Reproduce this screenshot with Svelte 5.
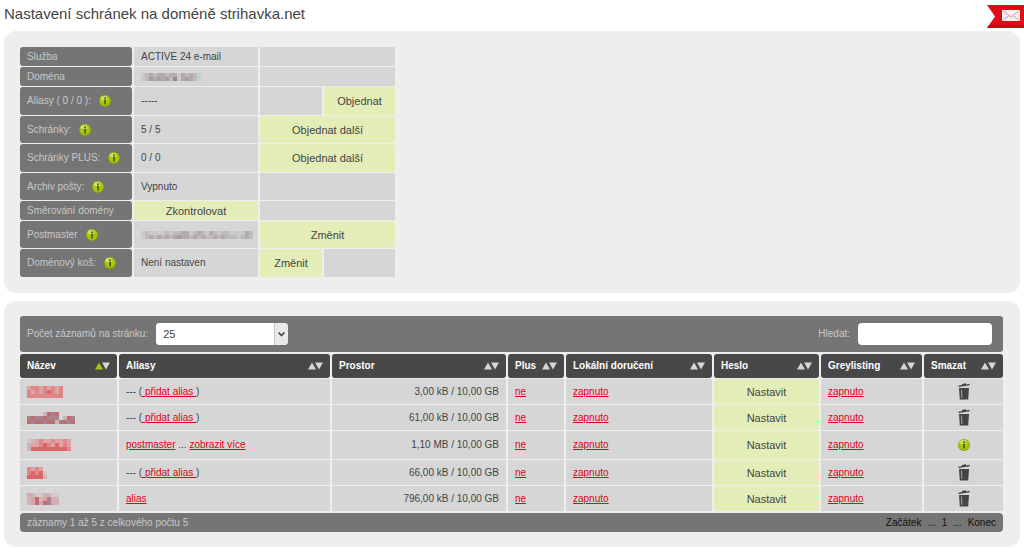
<script lang="ts">
  type Action = { label: string; column: "value" | "first" | "last" | "both" };
  type InfoRow = {
    label: string;
    value?: string;
    mosaic?: string[];
    info?: boolean;
    action?: Action;
  };

  const infoRows: InfoRow[] = [
    { label: "Služba", value: "ACTIVE 24 e-mail" },
    { label: "Doména", mosaic: ["klmlmmlmmkmlmlp", "klnmnmnlokmnmlp"] },
    { label: "Aliasy ( 0 / 0 ):", value: "-----", info: true, action: { label: "Objednat", column: "last" } },
    { label: "Schránky:", value: "5 / 5", info: true, action: { label: "Objednat další", column: "both" } },
    { label: "Schránky PLUS:", value: "0 / 0", info: true, action: { label: "Objednat další", column: "both" } },
    { label: "Archiv pošty:", value: "Vypnuto", info: true },
    { label: "Směrování domény", action: { label: "Zkontrolovat", column: "value" } },
    {
      label: "Postmaster",
      mosaic: ["klkkkklkllmmklmlkmlkllkkkkml", "klmlmlmlmnmmlmlmllmlmlllklml"],
      info: true,
      action: { label: "Změnit", column: "both" },
    },
    { label: "Doménový koš:", value: "Není nastaven", info: true, action: { label: "Změnit", column: "first" } },
  ];

  const columns = [
    { name: "Název", width: 97, sorted: true },
    { name: "Aliasy", width: 211 },
    { name: "Prostor", width: 174 },
    { name: "Plus", width: 56 },
    { name: "Lokální doručení", width: 146 },
    { name: "Heslo", width: 105 },
    { name: "Greylisting", width: 101 },
    { name: "Smazat", width: 79 },
  ];

  const mailboxes = [
    { mosaic: ["abbababab", "bababcbab", "bbbbbbbbb"], alias: "", space: "3,00 kB / 10,00 GB" },
    { mosaic: ["....gfef....", "efeefeee.gfeg", "feffeffgefeff"], alias: "", space: "61,00 kB / 10,00 GB" },
    { mosaic: ["hgabaabaaba", "gaabcbacaba", "gcccccccccb"], alias: "postmaster", more: true, space: "1,10 MB / 10,00 GB", locked: true },
    { mosaic: ["baba.", "bcbch", "ccccg"], alias: "", space: "66,00 kB / 10,00 GB" },
    { mosaic: ["aghhgghh", "gafgaegg", "gafafeag"], alias: "alias", space: "796,00 kB / 10,00 GB" },
  ];

  const shades: Record<string, string> = {
    a: "#dda4a5",
    b: "#df868b",
    c: "#de646b",
    e: "#ab8289",
    f: "#b96f77",
    g: "#cfb4b5",
    h: "#d3c8c9",
    k: "#ccc9c9",
    l: "#bebbbc",
    m: "#b1abad",
    n: "#a39ea3",
    o: "#97878d",
    p: "#c5d0d3",
    ".": "none",
  };

  let pageSize = "25";
  let search = "";
</script>

{#snippet infoIcon()}
  <svg class="info-icon" viewBox="0 0 12 12" role="img" aria-label="Informace">
    <circle cx="6" cy="6" r="6" fill="#89a604" />
    <circle cx="6" cy="5.5" r="5.2" fill="#a8c70c" />
    <ellipse cx="5" cy="3.2" rx="3.4" ry="2.2" fill="#d3e47c" opacity="0.8" />
    <path d="M5.2 2.4h1.7v1.5H5.2zM4.9 4.8h2v4.6H5.3V5.8h-.4z" fill="#4a5510" />
  </svg>
{/snippet}

{#snippet mosaicText(rows: string[])}
  <svg class="mosaic" width={rows[0].length * 4} height={rows.length * 4} shape-rendering="crispEdges" aria-hidden="true">
    {#each rows as row, y}
      {#each row as shade, x}
        <rect x={x * 4} y={y * 4} width="4" height="4" fill={shades[shade]} />
      {/each}
    {/each}
  </svg>
{/snippet}

{#snippet actionCell(label: string, span: number)}
  <td class="action" colspan={span}><button type="button">{label}</button></td>
{/snippet}

<header class="page-header">
  <h1>Nastavení schránek na doméně strihavka.net</h1>
  <svg class="ribbon" viewBox="0 0 37 23" aria-hidden="true">
    <path d="M0 0H37V23H0L8 11.5Z" fill="#df0d18" />
    <path d="M0 23L2 20H37V23Z" fill="#c90a15" />
    <rect x="15" y="5" width="18" height="11" fill="#f3f0ef" />
    <path d="M15.500 5.500l8.500 6.500L32.500 5.500M15.500 15.500l6.500-5M32.500 15.500l-6.500-5" fill="none" stroke="#c2a6a4" />
  </svg>
</header>

<main>
  <section class="panel">
    <table class="info">
      <colgroup>
        <col class="col-label" />
        <col class="col-value" />
        <col class="col-first" />
        <col class="col-last" />
      </colgroup>
      <tbody>
        {#each infoRows as row}
          <tr class:tall={row.info}>
            <th scope="row">
              <span class="row-label">{row.label}{#if row.info}{@render infoIcon()}{/if}</span>
            </th>
            {#if row.action?.column === "value"}
              {@render actionCell(row.action.label, 1)}
            {:else}
              <td>
                {#if row.mosaic}{@render mosaicText(row.mosaic)}{:else}{row.value}{/if}
              </td>
            {/if}
            {#if row.action?.column === "both"}
              {@render actionCell(row.action.label, 2)}
            {:else if row.action?.column === "first"}
              {@render actionCell(row.action.label, 1)}
              <td></td>
            {:else if row.action?.column === "last"}
              <td></td>
              {@render actionCell(row.action.label, 1)}
            {:else}
              <td colspan="2"></td>
            {/if}
          </tr>
        {/each}
      </tbody>
    </table>
  </section>

  <section class="panel list">
    <div class="toolbar">
      <label for="page-size">Počet záznamů na stránku:</label>
      <span class="select-box">
        <select id="page-size" bind:value={pageSize}>
          <option>25</option>
          <option>50</option>
          <option>100</option>
        </select>
        <svg class="select-arrow" viewBox="0 0 14 22" aria-hidden="true">
          <rect width="14" height="22" fill="#e9e9e9" />
          <path d="M.5 0V22" stroke="#c4c4c4" />
          <path d="M4.500 9.500l3 3 3-3" fill="none" stroke="#444" stroke-width="1.600" />
        </svg>
      </span>
      <label class="search-label" for="search">Hledat:</label>
      <input id="search" type="text" bind:value={search} />
    </div>

    <table class="mailboxes">
      <colgroup>
        {#each columns as column}
          <col style="width: {column.width}px" />
        {/each}
      </colgroup>
      <thead>
        <tr>
          {#each columns as column}
            <th scope="col">
              <div class="head">
                <span>{column.name}</span>
                <button type="button" class="sort" aria-label="Seřadit: {column.name}">
                  <svg viewBox="0 0 15 8" aria-hidden="true">
                    <path d="M0 7.500L4 .5l4 7z" fill={column.sorted ? "#a2c614" : "#d6d6d6"} />
                    <path d="M7 .5h8l-4 7z" fill="#d6d6d6" />
                  </svg>
                </button>
              </div>
            </th>
          {/each}
        </tr>
      </thead>
      <tbody>
        {#each mailboxes as box}
          <tr class:locked={box.locked}>
            <td>
              <a href="#schranka" aria-label="Schránka">{@render mosaicText(box.mosaic)}</a>
            </td>
            <td>
              {#if box.alias}
                <a href="#alias">{box.alias}</a>
                {#if box.more}... <a href="#aliasy">zobrazit více</a>{/if}
              {:else}
                --- (<a href="#pridat">&nbsp;přidat alias&nbsp;</a>)
              {/if}
            </td>
            <td class="space">{box.space}</td>
            <td><a href="#plus">ne</a></td>
            <td><a href="#doruceni">zapnuto</a></td>
            {@render actionCell("Nastavit", 1)}
            <td><a href="#greylisting">zapnuto</a></td>
            <td class="delete">
              {#if box.locked}
                {@render infoIcon()}
              {:else}
                <button type="button" aria-label="Smazat">
                  <svg class="trash" viewBox="0 0 12 17" aria-hidden="true">
                    <path d="M.3 2.700L4 2.100V1l4-.7v1.100l3.500-.6.2 1.500L.6 4.100z" fill="#444" />
                    <path d="M1 5h10l-.8 11.500H1.800z" fill="#444" />
                    <path d="M3.500 6.500l.4 8.500" stroke="#a8a8a8" fill="none" />
                  </svg>
                </button>
              {/if}
            </td>
          </tr>
        {/each}
      </tbody>
    </table>

    <footer class="pager">
      <span>záznamy 1 až 5 z celkového počtu 5</span>
      <nav aria-label="Stránkování">
        <a href="#zacatek">Začátek</a>
        <span>...</span>
        <a href="#1">1</a>
        <span>...</span>
        <a href="#konec">Konec</a>
      </nav>
    </footer>
  </section>
</main>

<style>
  :global(body) {
    margin: 0;
    background: #fff;
    color: #444;
    font: 10px/14px "Liberation Sans", Arial, sans-serif;
  }

  .page-header {
    display: flex;
    justify-content: space-between;
    align-items: flex-start;
    padding: 5px 0 3px 4px;
  }

  h1 {
    margin: 0;
    font-size: 15px;
    line-height: 18px;
    font-weight: normal;
  }

  .ribbon {
    width: 37px;
    height: 23px;
  }

  main {
    display: flex;
    flex-direction: column;
    gap: 8px;
    padding: 0 4px;
  }

  .panel {
    padding: 15px 14px;
    background: #efeeec;
    border-radius: 12px;
  }

  table {
    border-spacing: 2px 1px;
  }

  th,
  td {
    box-sizing: border-box;
    padding: 0 7px;
    text-align: left;
  }

  td {
    background: #d6d6d6;
  }

  button {
    padding: 0;
    border: 0;
    background: none;
    color: inherit;
    font: inherit;
    cursor: pointer;
  }

  td.action {
    padding: 0;
    background: #e3edb7;
    border-radius: 3px;
  }

  .action button {
    display: block;
    width: 100%;
    font-size: 11px;
    line-height: 18px;
  }

  .info-icon {
    flex: none;
    width: 12px;
    height: 12px;
  }

  .mosaic {
    display: block;
  }

  /* Domain overview */
  .info {
    table-layout: fixed;
    width: 379px;
  }

  .col-label {
    width: 112px;
  }

  .col-value {
    width: 124px;
  }

  .col-first {
    width: 62px;
  }

  .info tr {
    height: 19px;
  }

  .info .tall {
    height: 28px;
  }

  .info .tall:nth-child(even) {
    height: 27px;
  }

  .info th {
    background: #757575;
    border-radius: 3px;
    color: #c8c8c8;
    font-weight: normal;
  }

  .row-label {
    display: flex;
    align-items: center;
    gap: 8px;
    white-space: nowrap;
  }

  /* Mailbox list */
  .list {
    padding: 15px 17px 15px 16px;
  }

  .toolbar {
    display: flex;
    align-items: center;
    gap: 8px;
    height: 36px;
    margin-bottom: 1px;
    padding: 0 11px 0 7px;
    background: #757575;
    border-radius: 3px;
    color: #c8c8c8;
  }

  .select-box {
    display: flex;
    width: 132px;
    height: 22px;
    background: #fff;
    border-radius: 4px;
    overflow: hidden;
  }

  select {
    flex: 1;
    padding: 0 7px;
    border: 0;
    appearance: none;
    background: #fff;
    color: #444;
    font: inherit;
    font-size: 11px;
  }

  .select-arrow {
    width: 14px;
    height: 22px;
  }

  .search-label {
    margin-left: auto;
  }

  #search {
    box-sizing: border-box;
    width: 134px;
    height: 22px;
    padding: 0 8px;
    border: 0;
    border-radius: 4px;
    background: #fff;
    font: inherit;
    font-size: 11px;
  }

  .mailboxes {
    table-layout: fixed;
    width: calc(100% + 4px);
    margin: 0 -2px;
  }

  .mailboxes th {
    height: 24px;
    background: #484848;
    border-radius: 3px;
    color: #fff;
    white-space: nowrap;
  }

  .head {
    display: flex;
    justify-content: space-between;
    align-items: center;
  }

  .sort svg {
    display: block;
    width: 15px;
    height: 8px;
  }

  .mailboxes tbody tr {
    height: 25px;
  }

  .mailboxes tbody .locked {
    height: 28px;
  }

  .mailboxes a {
    color: #e2001a;
  }

  .mailboxes .space {
    text-align: right;
  }

  .delete button {
    display: block;
    margin: 0 auto;
  }

  .delete svg {
    display: block;
    margin: 0 auto;
  }

  .trash {
    width: 12px;
    height: 17px;
  }

  .pager {
    display: flex;
    justify-content: space-between;
    margin-top: 1px;
    padding: 0 7px;
    background: #757575;
    border-radius: 4px;
    color: #c8c8c8;
    line-height: 19px;
  }

  .pager nav {
    display: flex;
    gap: 6px;
    color: #111;
  }

  .pager a {
    color: #111;
    text-decoration: none;
  }
</style>
